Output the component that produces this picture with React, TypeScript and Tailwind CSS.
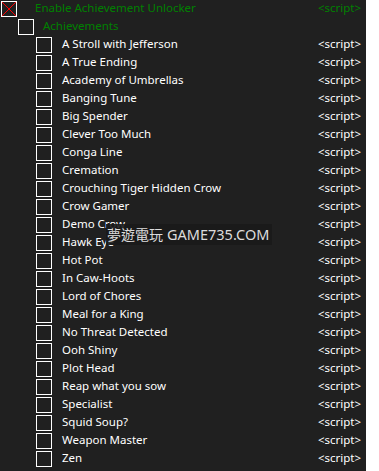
import React from 'react';

const items = [
  'A Stroll with Jefferson',
  'A True Ending',
  'Academy of Umbrellas',
  'Banging Tune',
  'Big Spender',
  'Clever Too Much',
  'Conga Line',
  'Cremation',
  'Crouching Tiger Hidden Crow',
  'Crow Gamer',
  'Demo Crow',
  'Hawk Eye',
  'Hot Pot',
  'In Caw-Hoots',
  'Lord of Chores',
  'Meal for a King',
  'No Threat Detected',
  'Ooh Shiny',
  'Plot Head',
  'Reap what you sow',
  'Specialist',
  'Squid Soup?',
  'Weapon Master',
  'Zen',
];

function Box({ checked }: { checked?: boolean }) {
  return (
    <span className="relative w-4 h-4 shrink-0 border border-white">
      {checked && (
        <svg className="absolute inset-0" width="14" height="14" viewBox="0 0 14 14">
          <line x1="0" y1="0" x2="14" y2="14" stroke="#ff0000" strokeWidth="1" />
          <line x1="14" y1="0" x2="0" y2="14" stroke="#ff0000" strokeWidth="1" />
        </svg>
      )}
    </span>
  );
}

export default function App() {
  return (
    <div className="w-[379px] h-[471px] bg-white">
      <div
        className="relative w-[366px] h-[471px] bg-[#202020] text-[11.5px] leading-[18px] text-white"
        style={{ fontFamily: '"Noto Sans", "Open Sans", sans-serif' }}
      >
        <div className="flex items-center h-[18px] pl-[1px] pr-[5px]">
          <Box checked />
          <span className="ml-[18px] -mt-[2px] text-[#008000]">Enable Achievement Unlocker</span>
          <span className="ml-auto -mt-[2px] text-[#008000]">&lt;script&gt;</span>
        </div>
        <div className="flex items-center h-[18px] pl-[18px]">
          <Box />
          <span className="ml-[9px] -mt-[2px] text-[#008000]">Achievements</span>
        </div>
        {items.map((name) => (
          <div key={name} className="flex items-center h-[18px] pl-[36px] pr-[5px]">
            <Box />
            <span className="ml-[10px] -mt-[2px]">{name}</span>
            <span className="ml-auto -mt-[2px]">&lt;script&gt;</span>
          </div>
        ))}
        <div className="absolute left-[106px] top-[224px] h-[21px] w-[166px] flex items-center pl-[1px] bg-[#1a1a1a]/90 text-[#dcdcdc] text-[14px] leading-[21px] whitespace-nowrap">
          <span style={{ fontFamily: '"Noto Sans CJK TC", sans-serif' }}>夢遊電玩</span>
          <span className="ml-[4px] text-[14.5px]" style={{ fontFamily: '"Noto Sans", sans-serif' }}>
            GAME735.COM
          </span>
        </div>
      </div>
    </div>
  );
}
